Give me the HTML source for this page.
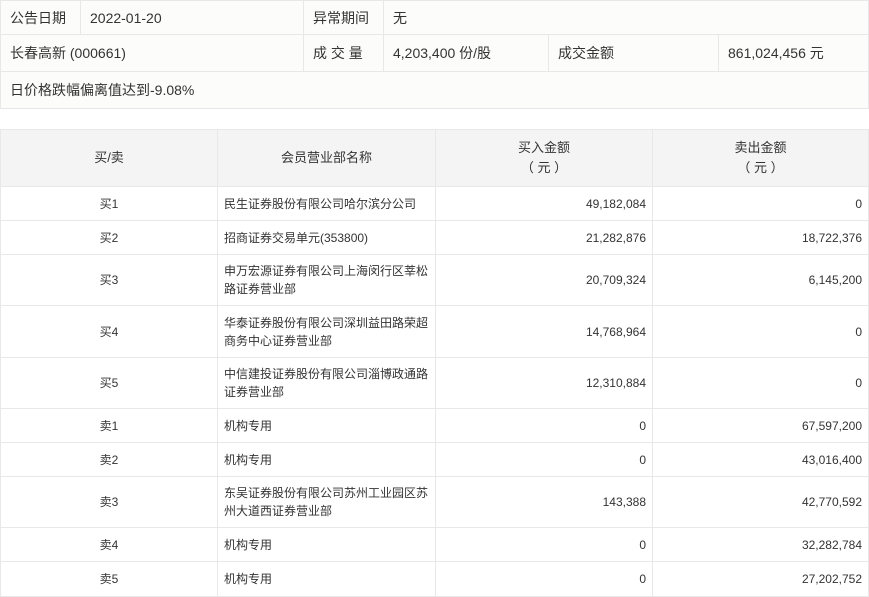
<!DOCTYPE html>
<html><head><meta charset="utf-8"><style>
*{margin:0;padding:0;box-sizing:border-box}
body{width:869px;height:597px;background:#fff;position:relative;overflow:hidden;font-family:"Liberation Sans","Noto Sans CJK SC",sans-serif;color:#333}
.c{position:absolute;border:1px solid #e8e8e8;display:flex;align-items:center;line-height:18px}
.t{background:#fcfcfa;font-size:14px;padding-left:9px}
.h{background:#f4f4f4;font-size:13px;justify-content:center;text-align:center;line-height:20px}
.d{background:#fff;font-size:12px}
.ctr{justify-content:center}
.l{padding-left:6px;padding-right:1px}
.r{justify-content:flex-end;padding-right:6px}
</style></head><body>
<div class="c t" style="left:0;top:0;width:81px;height:35px">公告日期</div>
<div class="c t" style="left:80px;top:0;width:224px;height:35px">2022-01-20</div>
<div class="c t" style="left:303px;top:0;width:81px;height:35px">异常期间</div>
<div class="c t" style="left:383px;top:0;width:486px;height:35px">无</div>
<div class="c t" style="left:0;top:34px;width:304px;height:38px">长春高新 (000661)</div>
<div class="c t" style="left:303px;top:34px;width:81px;height:38px">成 交 量</div>
<div class="c t" style="left:383px;top:34px;width:166px;height:38px">4,203,400 份/股</div>
<div class="c t" style="left:548px;top:34px;width:171px;height:38px">成交金额</div>
<div class="c t" style="left:718px;top:34px;width:151px;height:38px">861,024,456 元</div>
<div class="c t" style="left:0;top:71px;width:869px;height:38px">日价格跌幅偏离值达到-9.08%</div>

<div class="c h" style="left:0;top:129px;width:218px;height:58px">买/卖</div>
<div class="c h" style="left:217px;top:129px;width:219px;height:58px">会员营业部名称</div>
<div class="c h" style="left:435px;top:129px;width:218px;height:58px">买入金额<br>（ 元 ）</div>
<div class="c h" style="left:652px;top:129px;width:217px;height:58px">卖出金额<br>（ 元 ）</div>

<div id="rows"></div>
<script>
var rows=[
["买1","民生证券股份有限公司哈尔滨分公司","49,182,084","0",186,220],
["买2","招商证券交易单元(353800)","21,282,876","18,722,376",220,254],
["买3","申万宏源证券有限公司上海闵行区莘松<br>路证券营业部","20,709,324","6,145,200",254,305],
["买4","华泰证券股份有限公司深圳益田路荣超<br>商务中心证券营业部","14,768,964","0",305,357],
["买5","中信建投证券股份有限公司淄博政通路<br>证券营业部","12,310,884","0",357,408],
["卖1","机构专用","0","67,597,200",408,442],
["卖2","机构专用","0","43,016,400",442,476],
["卖3","东吴证券股份有限公司苏州工业园区苏<br>州大道西证券营业部","143,388","42,770,592",476,527],
["卖4","机构专用","0","32,282,784",527,561],
["卖5","机构专用","0","27,202,752",561,596]];
var h="";
rows.forEach(function(r){var t=r[4],ht=r[5]-r[4]+1;
h+='<div class="c d ctr" style="left:0;top:'+t+'px;width:218px;height:'+ht+'px">'+r[0]+'</div>';
h+='<div class="c d l" style="left:217px;top:'+t+'px;width:219px;height:'+ht+'px;white-space:nowrap">'+r[1]+'</div>';
h+='<div class="c d r" style="left:435px;top:'+t+'px;width:218px;height:'+ht+'px">'+r[2]+'</div>';
h+='<div class="c d r" style="left:652px;top:'+t+'px;width:217px;height:'+ht+'px">'+r[3]+'</div>';});
document.getElementById("rows").innerHTML=h;
</script>
</body></html>
